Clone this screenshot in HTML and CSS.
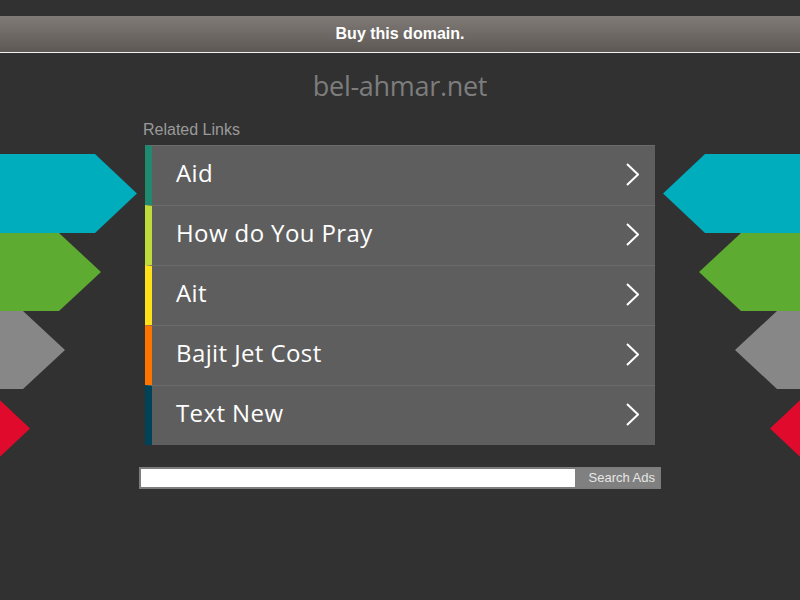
FILE: index.html
```html
<!DOCTYPE html>
<html>
<head>
<meta charset="utf-8">
<link rel="stylesheet" href="styles.css">
</head>
<body>
<div class="topbar">Buy this domain.</div>
<h1 class="domain">bel-ahmar.net</h1>
<div class="stage">
  <div class="decor">
    <svg width="139" height="313" viewBox="0 0 139 313">
      <polygon points="0,0 95,0 137,39.5 95,79 0,79" fill="#00adbd"/>
      <polygon points="0,79 59,79 101,118 59,157 0,157" fill="#5eab31"/>
      <polygon points="0,157 23,157 65,196 23,235 0,235" fill="#878787"/>
      <polygon points="0,235 -12,235 30,274.5 -12,314 0,314" fill="#e00b2c"/>
    </svg>
  </div>
  <div class="main">
    <div class="related">Related Links</div>
    <ul class="links">
      <li class="link s1"><span>Aid</span><svg class="chev" width="14" height="24" viewBox="0 0 14 24"><polyline points="2,2 13,12.5 2,23" fill="none" stroke="#fff" stroke-width="2"/></svg></li>
      <li class="link s2"><span>How do You Pray</span><svg class="chev" width="14" height="24" viewBox="0 0 14 24"><polyline points="2,2 13,12.5 2,23" fill="none" stroke="#fff" stroke-width="2"/></svg></li>
      <li class="link s3"><span>Ait</span><svg class="chev" width="14" height="24" viewBox="0 0 14 24"><polyline points="2,2 13,12.5 2,23" fill="none" stroke="#fff" stroke-width="2"/></svg></li>
      <li class="link s4"><span>Bajit Jet Cost</span><svg class="chev" width="14" height="24" viewBox="0 0 14 24"><polyline points="2,2 13,12.5 2,23" fill="none" stroke="#fff" stroke-width="2"/></svg></li>
      <li class="link s5"><span>Text New</span><svg class="chev" width="14" height="24" viewBox="0 0 14 24"><polyline points="2,2 13,12.5 2,23" fill="none" stroke="#fff" stroke-width="2"/></svg></li>
    </ul>
    <form class="search">
      <input class="search-input" type="text">
      <button class="search-btn" type="button">Search Ads</button>
    </form>
  </div>
  <div class="decor decor-right">
    <svg width="139" height="313" viewBox="0 0 139 313">
      <polygon points="0,0 95,0 137,39.5 95,79 0,79" fill="#00adbd"/>
      <polygon points="0,79 59,79 101,118 59,157 0,157" fill="#5eab31"/>
      <polygon points="0,157 23,157 65,196 23,235 0,235" fill="#878787"/>
      <polygon points="0,235 -12,235 30,274.5 -12,314 0,314" fill="#e00b2c"/>
    </svg>
  </div>
</div>
</body>
</html>
```

FILE: styles.css
```css
html, body {
  margin: 0;
  padding: 0;
  background: #313131;
  height: 100%;
  overflow: hidden;
}
body {
  font-family: "Liberation Sans", Arial, sans-serif;
  padding-top: 16px;
}
.topbar {
  height: 36px;
  line-height: 36px;
  background: linear-gradient(#807b77, #5d5854);
  border-bottom: 1px solid #f2f2f2;
  color: #fff;
  font-weight: bold;
  font-size: 16px;
  text-align: center;
}
.domain {
  margin: 18px 0 0;
  height: 30px;
  line-height: 30px;
  font-family: "Open Sans", sans-serif;
  font-weight: 500;
  font-size: 27px;
  color: #7d7d7d;
  text-align: center;
  letter-spacing: -0.3px;
}
.stage {
  margin-top: 19px;
  display: grid;
  grid-template-columns: 139px 522px 139px;
}
.decor {
  padding-top: 34px;
  line-height: 0;
}
.decor svg {
  display: block;
  overflow: hidden;
}
.decor-right svg {
  transform: scaleX(-1);
}
.related {
  margin-left: 4px;
  height: 18px;
  line-height: 18px;
  font-size: 16px;
  color: #9a9a9a;
  margin-bottom: 7px;
  position: relative;
  top: 1px;
}
.links {
  list-style: none;
  margin: 0 6px;
  padding: 0;
}
.link {
  height: 59px;
  border-top: 1px solid #6b6b6b;
  background: #5e5e5e;
  border-left: 7px solid #1f8a70;
  display: flex;
  align-items: center;
  justify-content: space-between;
  padding: 0 16px 0 24px;
  color: #fff;
  font-family: "Open Sans", sans-serif;
  font-size: 24px;
  letter-spacing: 0.4px;
}
.link span {
  margin-top: -6px;
}
.chev {
  display: block;
  margin-top: -3px;
}
.s1 { border-left-color: #1f8a70; }
.s2 { border-left-color: #bedb39; }
.s3 { border-left-color: #ffe11a; }
.s4 { border-left-color: #fd7400; }
.s5 { border-left-color: #004358; }
.search {
  margin: 22px 0 0;
  display: flex;
  height: 22px;
  box-sizing: border-box;
  border: 2px solid #7d7d7d;
  background: #808080;
}
.search-input {
  flex: 1;
  margin: 0;
  border: 0;
  padding: 0;
  height: 18px;
  background: #fff;
  outline: none;
}
.search-btn {
  width: 84px;
  margin: 0;
  border: 0;
  padding: 0 4px 0 0;
  background: #808080;
  color: #e6e6e6;
  font-family: "Liberation Sans", Arial, sans-serif;
  font-size: 13px;
  text-align: right;
  height: 18px;
  line-height: 18px;
}
```
